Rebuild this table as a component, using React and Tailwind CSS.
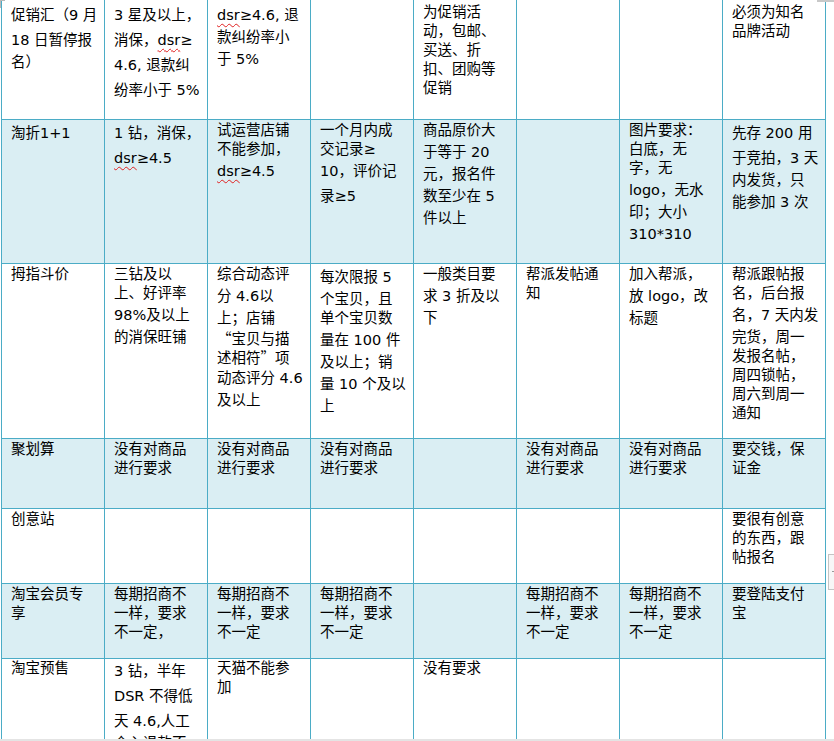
import React from 'react';

// 表格数据：每个单元格是按参考图手动断好的行
const rows = [
  {
    bg: 'bg-white',
    h: 'h-[120px]',
    pt: 'pt-[3px]',
    cells: [
      ['促销汇（9 月', '18 日暂停报', '名）'],
      ['3 星及以上，', '消保，dsr≥', '4.6, 退款纠', '纷率小于 5%'],
      ['dsr≥4.6, 退', '款纠纷率小', '于 5%'],
      [],
      ['为促销活', '动，包邮、', '买送、折', '扣、团购等', '促销'],
      [],
      [],
      ['必须为知名', '品牌活动'],
    ],
  },
  {
    bg: 'bg-[#daeef3]',
    h: 'h-[144px]',
    pt: 'pt-[1px]',
    cells: [
      ['淘折1+1'],
      ['1 钻，消保，', 'dsr≥4.5'],
      ['试运营店铺', '不能参加，', 'dsr≥4.5'],
      ['一个月内成', '交记录≥', '10，评价记', '录≥5'],
      ['商品原价大', '于等于 20', '元，报名件', '数至少在 5', '件以上'],
      [],
      ['图片要求：', '白底，无', '字，无', 'logo，无水', '印；大小', '310*310'],
      ['先存 200 用', '于竞拍，3 天', '内发货，只', '能参加 3 次'],
    ],
  },
  {
    bg: 'bg-white',
    h: 'h-[175px]',
    pt: 'pt-[1px]',
    cells: [
      ['拇指斗价'],
      ['三钻及以', '上、好评率', '98%及以上', '的消保旺铺'],
      ['综合动态评', '分 4.6以', '上；店铺', '“宝贝与描', '述相符”项', '动态评分 4.6', '及以上'],
      ['每次限报 5', '个宝贝，且', '单个宝贝数', '量在 100 件', '及以上；销', '量 10 个及以', '上'],
      ['一般类目要', '求 3 折及以', '下'],
      ['帮派发帖通', '知'],
      ['加入帮派，', '放 logo，改', '标题'],
      ['帮派跟帖报', '名，后台报', '名，7 天内发', '完货，周一', '发报名帖，', '周四锁帖，', '周六到周一', '通知'],
    ],
  },
  {
    bg: 'bg-[#daeef3]',
    h: 'h-[70px]',
    pt: 'pt-[1px]',
    cells: [
      ['聚划算'],
      ['没有对商品', '进行要求'],
      ['没有对商品', '进行要求'],
      ['没有对商品', '进行要求'],
      [],
      ['没有对商品', '进行要求'],
      ['没有对商品', '进行要求'],
      ['要交钱，保', '证金'],
    ],
  },
  {
    bg: 'bg-white',
    h: 'h-[75px]',
    pt: 'pt-[1px]',
    cells: [
      ['创意站'],
      [],
      [],
      [],
      [],
      [],
      [],
      ['要很有创意', '的东西，跟', '帖报名'],
    ],
  },
  {
    bg: 'bg-[#daeef3]',
    h: 'h-[75px]',
    pt: 'pt-[1px]',
    cells: [
      ['淘宝会员专', '享'],
      ['每期招商不', '一样，要求', '不一定，'],
      ['每期招商不', '一样，要求', '不一定'],
      ['每期招商不', '一样，要求', '不一定'],
      [],
      ['每期招商不', '一样，要求', '不一定'],
      ['每期招商不', '一样，要求', '不一定'],
      ['要登陆支付', '宝'],
    ],
  },
  {
    bg: 'bg-white',
    h: 'h-[100px]',
    pt: 'pt-0',
    cells: [
      ['淘宝预售'],
      ['3 钻，半年', 'DSR 不得低', '天 4.6,人工', '介入退款不'],
      ['天猫不能参', '加'],
      [],
      ['没有要求'],
      [],
      [],
      [],
    ],
  },
];

const renderText = (text) =>
  text.split(/(dsr|[“”])/).map((part, i) => {
    if (part === 'dsr') {
      return (
        <span key={i} className="underline decoration-wavy decoration-[#e02020] decoration-[1px] underline-offset-[3px]">
          dsr
        </span>
      );
    }
    if (part === '“' || part === '”') {
      return (
        <span key={i} className="font-['Noto_Sans_CJK_SC',sans-serif]">
          {part}
        </span>
      );
    }
    return part;
  });

const Line = ({ text }) => {
  const latin = /[0-9A-Za-z%]/.test(text);
  return (
    <div className={`whitespace-nowrap ${latin ? 'h-[25px] leading-[25px]' : 'h-[19px] leading-[19px]'}`}>
      {renderText(text)}
    </div>
  );
};

export default function App() {
  return (
    <div className="relative h-[741px] w-[834px] overflow-hidden bg-white text-[14.5px] text-black font-['DejaVu_Sans','Noto_Sans_CJK_SC',sans-serif]">
      {/* Table */}
      <div className="ml-[1px] w-[825px] border-l border-[#4bacc6]">
        {rows.map((row, r) => (
          <div key={r} className={`flex ${row.h} ${row.bg}`}>
            {row.cells.map((lines, c) => (
              <div
                key={c}
                className={`w-[103px] shrink-0 overflow-hidden border-r border-b border-[#4bacc6] pl-[9px] ${row.pt}`}
              >
                {lines.map((t, i) => (
                  <Line key={i} text={t} />
                ))}
              </div>
            ))}
          </div>
        ))}
      </div>

      {/* window edges */}
      <div className="absolute left-0 top-0 h-[8px] w-px bg-[#b8b8b8]" />
      <div className="absolute left-0 top-0 h-px w-[5px] bg-[#b8b8b8]" />
      <div className="absolute right-0 top-0 h-[2px] w-[17px] bg-[#c8c8c8]" />
      <div className="absolute left-[828px] top-[554px] h-[36px] w-[10px] border border-[#c4c4c4] bg-[#f7f7f7]">
        <div className="ml-[3px] mt-[16px] h-px w-[4px] bg-[#999]" />
      </div>
      <div className="absolute bottom-0 left-0 h-[2px] w-full bg-[#e4e4e4]" />
    </div>
  );
}
